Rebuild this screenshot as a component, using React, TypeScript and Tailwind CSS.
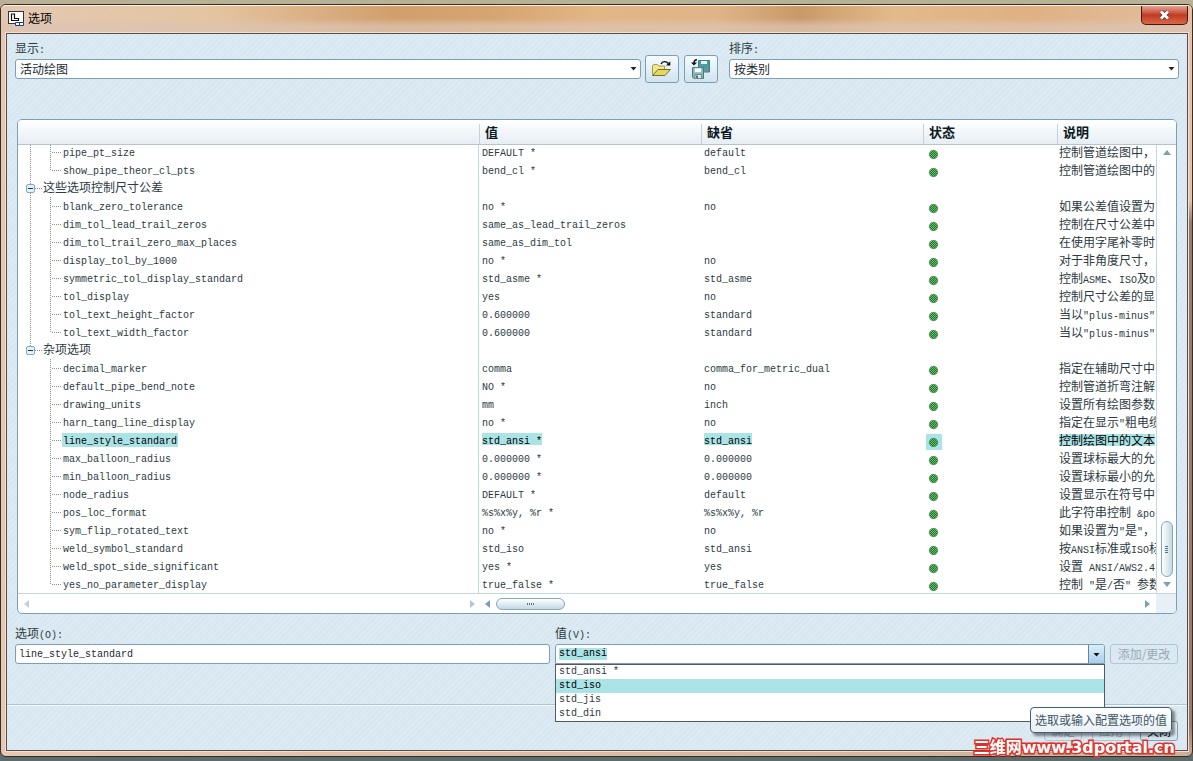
import { useEffect, useRef, useState } from "react"

type Option = {
  name: string
  value?: string
  standard?: string
  description?: string
  group?: boolean
  last?: boolean
}

const options: Option[] = [
  { name: "pipe_pt_size", value: "DEFAULT *", standard: "default", description: "控制管道绘图中，" },
  { name: "show_pipe_theor_cl_pts", value: "bend_cl *", standard: "bend_cl", description: "控制管道绘图中的", last: true },
  { name: "这些选项控制尺寸公差", group: true },
  { name: "blank_zero_tolerance", value: "no *", standard: "no", description: "如果公差值设置为" },
  { name: "dim_tol_lead_trail_zeros", value: "same_as_lead_trail_zeros", standard: "", description: "控制在尺寸公差中" },
  { name: "dim_tol_trail_zero_max_places", value: "same_as_dim_tol", standard: "", description: "在使用字尾补零时" },
  { name: "display_tol_by_1000", value: "no *", standard: "no", description: "对于非角度尺寸，" },
  { name: "symmetric_tol_display_standard", value: "std_asme *", standard: "std_asme", description: "控制ASME、ISO及D" },
  { name: "tol_display", value: "yes", standard: "no", description: "控制尺寸公差的显" },
  { name: "tol_text_height_factor", value: "0.600000", standard: "standard", description: "当以\"plus-minus\"" },
  { name: "tol_text_width_factor", value: "0.600000", standard: "standard", description: "当以\"plus-minus\"", last: true },
  { name: "杂项选项", group: true },
  { name: "decimal_marker", value: "comma", standard: "comma_for_metric_dual", description: "指定在辅助尺寸中" },
  { name: "default_pipe_bend_note", value: "NO *", standard: "no", description: "控制管道折弯注解" },
  { name: "drawing_units", value: "mm", standard: "inch", description: "设置所有绘图参数" },
  { name: "harn_tang_line_display", value: "no *", standard: "no", description: "指定在显示\"粗电缆" },
  { name: "line_style_standard", value: "std_ansi *", standard: "std_ansi", description: "控制绘图中的文本" },
  { name: "max_balloon_radius", value: "0.000000 *", standard: "0.000000", description: "设置球标最大的允" },
  { name: "min_balloon_radius", value: "0.000000 *", standard: "0.000000", description: "设置球标最小的允" },
  { name: "node_radius", value: "DEFAULT *", standard: "default", description: "设置显示在符号中" },
  { name: "pos_loc_format", value: "%s%x%y, %r *", standard: "%s%x%y, %r", description: "此字符串控制 &po" },
  { name: "sym_flip_rotated_text", value: "no *", standard: "no", description: "如果设置为\"是\"，" },
  { name: "weld_symbol_standard", value: "std_iso", standard: "std_ansi", description: "按ANSI标准或ISO标" },
  { name: "weld_spot_side_significant", value: "yes *", standard: "yes", description: "设置 ANSI/AWS2.4" },
  { name: "yes_no_parameter_display", value: "true_false *", standard: "true_false", description: "控制 \"是/否\" 参数", last: true },
]

const choices = ["std_ansi *", "std_iso", "std_jis", "std_din"]

const field = "h-5 w-full rounded-[3px] border border-[#7ba0b6] bg-white text-[#1c2a33]"

// Latin runs are set in the smaller monospaced face, CJK stays at 12px
function Mixed({ text }: { text: string }) {
  const runs = text.match(/[\x20-\x7e]+|[^\x20-\x7e]+/g) ?? []
  return (
    <>
      {runs.map((run, i) =>
        run.charCodeAt(0) < 127 ? (
          <span key={i} className="font-['Liberation_Mono',monospace] text-[10px]">{run}</span>
        ) : (
          <span key={i}>{run}</span>
        )
      )}
    </>
  )
}

function Triangle({ dir, color = "#7f9fb0" }: { dir: "up" | "down" | "left" | "right"; color?: string }) {
  const points = {
    up: "0,6 8,6 4,1",
    down: "0,1 8,1 4,6",
    left: "6,0 6,8 1,4",
    right: "1,0 1,8 6,4",
  }
  return (
    <svg className="shrink-0" width="8" height="8" viewBox="0 0 8 8">
      <polygon points={points[dir]} fill={color} />
    </svg>
  )
}

function TreeGuide({ option, hasNextGroup }: { option: Option; hasNextGroup: boolean }) {
  return (
    <svg
      className={option.group ? "w-6 shrink-0" : "w-11 shrink-0"}
      width={option.group ? 24 : 44}
      height="18"
      stroke="#8a8f92"
      strokeDasharray="1 1"
      shapeRendering="crispEdges"
    >
      {option.group ? (
        <>
          <path d={hasNextGroup ? "M12.5 0V18" : "M12.5 0V8"} />
          <path d="M17 9.5H24" />
          <rect x="8.5" y="5.5" width="8" height="8" rx="1.5" fill="#e3f0f6" stroke="#86aabd" strokeDasharray="none" shapeRendering="auto" />
          <path d="M10 9.5H15" stroke="#10384c" strokeDasharray="none" />
        </>
      ) : (
        <>
          {hasNextGroup && <path d="M12.5 0V18" />}
          <path d={option.last ? "M32.5 0V9" : "M32.5 0V18"} />
          <path d="M34 9.5H44" />
        </>
      )}
    </svg>
  )
}

function StatusDot({ selected }: { selected: boolean }) {
  return (
    <svg className={selected ? "bg-[#aae4e6]" : ""} width="16" height="16" viewBox="0 0 16 16">
      <defs>
        <pattern id="dither" width="2" height="2" patternUnits="userSpaceOnUse">
          <rect width="2" height="2" fill="#1f7a2a" />
          <rect width="1" height="1" fill="#6fb574" />
          <rect x="1" y="1" width="1" height="1" fill="#6fb574" />
        </pattern>
      </defs>
      <circle cx="7.5" cy="8.5" r="4.2" fill="url(#dither)" stroke="#2c7d35" strokeWidth="0.6" />
    </svg>
  )
}

function OptionRow({ option, hasNextGroup }: { option: Option; hasNextGroup: boolean }) {
  const selected = option.name === "line_style_standard"
  const mark = selected ? "h-3 bg-[#aae4e6] leading-3 text-black" : "h-3 leading-3"
  const nameMark = selected ? "h-3.5 bg-[#aae4e6] px-px leading-3 text-black" : "h-3.5 px-px leading-3"

  return (
    <tr className="h-[18px]">
      <td className="border-r border-[#c3d9e2] p-0">
        <div className="flex h-[18px] items-center pb-0.5">
          <TreeGuide option={option} hasNextGroup={hasNextGroup} />
          <span className={nameMark}><Mixed text={option.name} /></span>
        </div>
      </td>
      <td className="p-0 pl-[3px]">
        <div className="flex h-[18px] items-center pb-1"><span className={mark}><Mixed text={option.value ?? ""} /></span></div>
      </td>
      <td className="p-0 pl-[3px]">
        <div className="flex h-[18px] items-center pb-1"><span className={mark}><Mixed text={option.standard ?? ""} /></span></div>
      </td>
      <td className="p-0 pl-[3px]">
        <div className="flex h-[18px] items-end">{!option.group && <StatusDot selected={selected} />}</div>
      </td>
      <td className="overflow-hidden p-0 pl-0.5">
        <div className="flex h-[18px] items-center pb-0.5"><span className={mark}><Mixed text={option.description ?? ""} /></span></div>
      </td>
    </tr>
  )
}

function OptionTable() {
  const head = "relative p-0 pl-1.5 text-left text-[13px] font-bold text-[#0b1a22]"
  const divider = "absolute left-0 top-1 h-5 w-px bg-[#c3d3dc]"
  const lastGroup = options.map((o) => !!o.group).lastIndexOf(true)

  return (
    <div className="flex flex-col overflow-hidden rounded-[5px] border border-[#7ba0b6] bg-white">
      <div className="flex">
        <div className="h-[473px] min-w-0 flex-1 overflow-hidden">
          <table className="w-full table-fixed border-separate border-spacing-0 whitespace-nowrap">
            <colgroup>
              <col />
              <col className="w-[222px]" />
              <col className="w-[222px]" />
              <col className="w-[134px]" />
              <col className="w-[99px]" />
            </colgroup>
            <thead>
              <tr className="relative h-6 bg-linear-to-b from-white to-[#e6eef4] shadow-[0_1px_0_#b4c5cf]">
                <th className="p-0" aria-label="选项"></th>
                <th className={head}><span className={divider} />值</th>
                <th className={head}><span className={divider} />缺省</th>
                <th className={head}><span className={divider} />状态</th>
                <th className={head}><span className={divider} />说明</th>
              </tr>
            </thead>
            <tbody>
              {options.map((option, i) => (
                <OptionRow key={option.name} option={option} hasNextGroup={i < lastGroup} />
              ))}
            </tbody>
          </table>
        </div>
        <div className="flex w-5 flex-col">
          <div className="h-[25px] border-b border-[#b4c5cf] bg-linear-to-b from-white to-[#e6eef4]" />
          <div className="flex flex-1 flex-col items-center border-l border-[#c3d9e2] py-1">
            <Triangle dir="up" />
            <div className="mt-auto mb-1 flex h-14 w-3 flex-col items-center justify-center gap-px rounded-full border border-[#86a9bd] bg-linear-to-r from-white to-[#c3d8e4]">
              <span className="h-px w-[3px] bg-[#56788a]" />
              <span className="h-px w-[3px] bg-[#56788a]" />
              <span className="h-px w-[3px] bg-[#56788a]" />
              <span className="h-px w-[3px] bg-[#56788a]" />
            </div>
            <Triangle dir="down" />
          </div>
        </div>
      </div>
      <div className="flex h-5 shrink-0 border-t border-[#c3d9e2]">
        <div className="flex flex-1 items-center justify-between pl-[5px] pr-[3px]">
          <Triangle dir="left" color="#c3d0d8" />
          <Triangle dir="right" color="#b5c8d2" />
        </div>
        <div className="flex w-[676px] items-center gap-1 px-1">
          <Triangle dir="left" />
          <div className="flex h-3 w-[69px] items-center justify-center gap-px rounded-full border border-[#86a9bd] bg-linear-to-b from-white to-[#c3d8e4]">
            <span className="h-[2px] w-px bg-[#56788a]" />
            <span className="h-[2px] w-px bg-[#56788a]" />
            <span className="h-[2px] w-px bg-[#56788a]" />
            <span className="h-[2px] w-px bg-[#56788a]" />
          </div>
          <span className="ml-auto flex"><Triangle dir="right" /></span>
        </div>
        <div className="w-5 bg-[#e8f0f5]" />
      </div>
    </div>
  )
}

function Dropdown({ id, label, value, className }: { id: string; label: string; value: string; className: string }) {
  return (
    <div className={className}>
      <label htmlFor={id} className="block h-[19px] leading-4">{label}<Mixed text=":" /></label>
      <div className="relative flex">
        <select id={id} className={`${field} appearance-none px-1 leading-[18px]`} defaultValue={value}>
          <option>{value}</option>
        </select>
        <span className="pointer-events-none absolute right-1 top-1.5">
          <svg width="7" height="7" viewBox="0 0 7 7"><path d="M.5 2H6.5L3.5 5.5Z" fill="#222" /></svg>
        </span>
      </div>
    </div>
  )
}

function FolderIcon() {
  return (
    <svg width="20" height="18" viewBox="0 0 20 18" fill="none">
      <path d="M.5 15V5.5L2 4.500H5.500L7 6H12.500V9.500" fill="#f3e68a" stroke="#a39b4a" />
      <path d="M.5 15.500L6 9.500H18.500L13 15.500Z" fill="#e6d765" stroke="#77702a" />
      <path d="M9 4C10.500 1 14 .8 16.500 3.500" stroke="#111" strokeWidth="1.4" />
      <path d="M18.300 1.200V5.500H14Z" fill="#111" />
    </svg>
  )
}

function DisksIcon() {
  return (
    <svg width="20" height="20" viewBox="0 0 20 20" fill="none">
      <path d="M7.5 1.5H18.5V13H7.5Z" fill="#4b9c9e" stroke="#3a7f83" />
      <path d="M10 2H16V5H10Z" fill="#e8f1f2" />
      <path d="M13 9.5H17V12.5H13Z" fill="#7d8c90" />
      <path d="M1.5 8.5H12.5V19.5H3L1.5 18Z" fill="#73c2bd" stroke="#4d7779" />
      <path d="M3.5 9H10.5V13.5H3.5Z" fill="#f5f8f8" stroke="#9ab" strokeWidth=".5" />
      <path d="M4 15.5H10.5V19.5H4Z" fill="#e1e6e8" stroke="#788" />
      <path d="M5 16.5H7V19H5Z" fill="#667" />
      <path d="M6 .7C3.5 .7 3 2 3 4" stroke="#111" strokeWidth="1.4" />
      <path d="M0 3.5H6L3 6.5Z" fill="#111" />
    </svg>
  )
}

function TitleBar() {
  return (
    <header className="flex h-7 shrink-0 items-start justify-between rounded-t-[5px] border-t border-[#fff1df] bg-[linear-gradient(to_bottom,transparent_45%,rgba(220,196,178,0.75)_75%),linear-gradient(to_right,#e3c8b3_0%,#e4c4a0_18%,#d19f6c_33%,#d6a672_42%,#e2b685_50%,#dfb588_60%,#c99a68_67%,#e2ba8a_75%,#dfb183_86%,#e0bfa0_100%)]">
      <div className="flex items-center gap-1 pl-[7px] pt-1">
        <svg width="16" height="16" viewBox="0 0 16 16">
          <rect x=".5" y="1.5" width="15" height="12" fill="#fff" stroke="#333" />
          <path d="M3.5 4V10.5H10.5V8.5H6.5V4Z" fill="#fff" stroke="#111" strokeWidth="1.2" />
          <path d="M7.5 12.5H15.5V15.5H7.5ZM11.5 12V16" fill="#fff" stroke="#223a9a" />
        </svg>
        <h1 className="text-xs leading-4 text-black">选项</h1>
      </div>
      <button
        aria-label="关闭窗口"
        className="mr-1 flex h-[19px] w-[47px] items-center justify-center rounded-b-[5px] border border-t-0 border-[#4a1710] bg-linear-to-b from-[#e2a295] via-[#c23a22] to-[#d8674a]"
      >
        <svg width="13" height="12" viewBox="0 0 13 12">
          <path d="M3 2.5L10 9.5M10 2.5L3 9.5" stroke="#5b3b3b" strokeWidth="4.5" />
          <path d="M3 2.5L10 9.5M10 2.5L3 9.5" stroke="#fff" strokeWidth="2.8" />
        </svg>
      </button>
    </header>
  )
}

function ValueBox() {
  const [active, setActive] = useState("std_iso")
  const inputRef = useRef<HTMLInputElement>(null)

  useEffect(() => {
    inputRef.current?.focus()
    inputRef.current?.select()
  }, [])

  return (
    <div className="w-[550px]">
      <label htmlFor="value" className="block h-[19px] leading-4">值<Mixed text="(V):" /></label>
      <div className="relative">
        <div className="flex h-5 overflow-hidden rounded-t-[3px] border border-[#7ba0b6] bg-white">
          <input
            id="value"
            ref={inputRef}
            defaultValue="std_ansi"
            className="min-w-0 flex-1 px-[3px] font-['Liberation_Mono',monospace] text-[10px] leading-3 outline-none selection:bg-[#aae4e6] selection:text-black"
          />
          <button aria-label="展开" className="flex w-4 items-center justify-center border-l border-[#5c87a4] bg-linear-to-b from-[#dceefa] to-[#a9cfea]">
            <svg width="7" height="7" viewBox="0 0 7 7"><path d="M.5 2H6.5L3.5 5.5Z" fill="#111" /></svg>
          </button>
        </div>
        <ul role="listbox" className="absolute inset-x-0 top-5 z-10 border border-[#4d5b63] bg-white font-['Liberation_Mono',monospace] text-[10px] leading-[14px]">
          {choices.map((choice) => (
            <li
              key={choice}
              role="option"
              aria-selected={choice === active}
              onMouseEnter={() => setActive(choice)}
              className={choice === active ? "bg-[#aae4e6] px-[3px] text-black" : "px-[3px]"}
            >
              {choice}
            </li>
          ))}
        </ul>
      </div>
    </div>
  )
}

export default function App() {
  const iconButton = "flex h-7 w-[34px] items-center justify-center rounded-[3px] border border-[#7ba0b6] bg-linear-to-b from-[#f6fbfe] to-[#cfe3f0]"
  const disabled = "h-5 rounded-[3px] border border-[#b4c5cf] leading-[18px] text-[#9aa9b3]"

  return (
    <div className="flex min-h-screen flex-col bg-linear-to-b from-[#b9b195] to-[#5e6b6c] pb-1 font-['Noto_Sans_CJK_SC',sans-serif] text-xs text-[#2c3a42]">
      <div className="h-1 shrink-0" />
      <main className="flex flex-1 flex-col rounded-[6px] border border-[#3b2c22] [background:linear-gradient(to_bottom,#dfc3ae_26%,#8f7d76_29%,#8f7d76_96%,#c9ac98)_right/5px_100%_no-repeat,linear-gradient(to_right,#e3c8b3,#cdb09a)]">
        <TitleBar />
        <div className="mb-[5px] ml-[5px] mr-1 flex flex-1 flex-col border border-[#5b4a45] bg-[repeating-linear-gradient(135deg,#d8e7f0_0_2px,#dceaf3_2px_4px)] shadow-[0_0_0_1px_#f3e0d0]">
          <div className="flex items-end px-2 pb-9 pt-1.5">
            <Dropdown id="show" label="显示" value="活动绘图" className="flex-1 pb-1" />
            <button aria-label="打开配置" className={`${iconButton} ml-1`}><FolderIcon /></button>
            <button aria-label="保存配置" className={`${iconButton} ml-[5px]`}><DisksIcon /></button>
            <Dropdown id="sort" label="排序" value="按类别" className="ml-[11px] w-[450px] pb-1" />
          </div>

          <div className="px-2.5">
            <OptionTable />
          </div>

          <div className="flex items-end gap-[5px] pb-10 pl-2 pr-[9px] pt-[11px]">
            <div className="flex-1">
              <label htmlFor="option" className="block h-[19px] leading-4">选项<Mixed text="(O):" /></label>
              <input
                id="option"
                defaultValue="line_style_standard"
                className={`${field} block px-[3px] font-['Liberation_Mono',monospace] text-[10px]`}
              />
            </div>
            <ValueBox />
            <button disabled className={`${disabled} w-[68px]`}>添加/更改</button>
          </div>

          <footer className="relative flex flex-1 items-start justify-end gap-2.5 border-t border-[#b0c5d1] pb-2 pl-2 pr-[9px] pt-4 shadow-[inset_0_1px_0_#f4f9fc]">
            <button disabled className={`${disabled} w-[38px]`}>确定</button>
            <button disabled className={`${disabled} w-[38px]`}>应用</button>
            <button className="h-5 w-[38px] rounded-[3px] border border-[#7ba0b6] bg-linear-to-b from-white to-[#d3e5f0] leading-[18px] text-black">关闭</button>
            <div role="tooltip" className="absolute right-[15px] top-0.5 z-20 rounded-[4px] border border-[#3f5f73] bg-linear-to-b from-white to-[#e9f0f5] px-1 leading-6 text-[#3d5666] shadow-[3px_3px_3px_rgba(0,0,0,0.45)]">
              选取或输入配置选项的值
            </div>
            <div className="absolute -bottom-1.5 right-3 z-20 whitespace-nowrap font-['DejaVu_Sans','Noto_Sans_CJK_SC',sans-serif] text-[16px] font-bold leading-4 text-white [paint-order:stroke] [-webkit-text-stroke:3px_#e0302a]">
              三维网www.3dportal.cn
            </div>
          </footer>
        </div>
      </main>
    </div>
  )
}
